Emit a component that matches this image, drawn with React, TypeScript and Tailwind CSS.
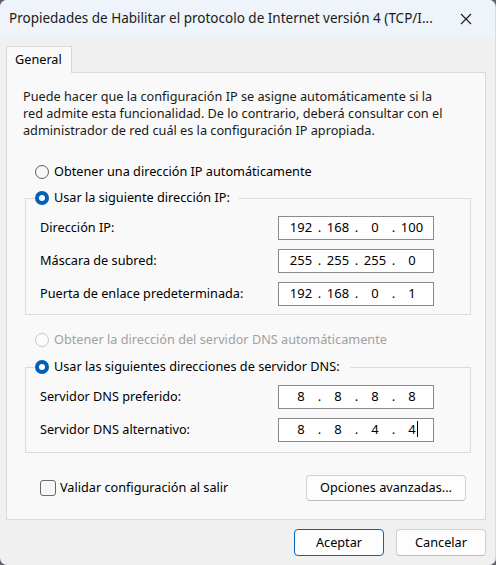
import React from "react";

const font = "font-['Noto_Sans',_'Liberation_Sans',sans-serif]";

const Radio = ({ checked, disabled }: { checked?: boolean; disabled?: boolean }) =>
  checked ? (
    <span className="w-[14px] h-[14px] rounded-full bg-[#005fb8] flex items-center justify-center shrink-0">
      <span className="w-[6px] h-[6px] rounded-full bg-white" />
    </span>
  ) : (
    <span
      className={
        "w-[14px] h-[14px] rounded-full border shrink-0 " +
        (disabled ? "border-[#c6c6c6] bg-[#fbfbfb]" : "border-[#5f5f5f] bg-[#f7f7f7]")
      }
    />
  );

const IpBox = ({ parts, caret }: { parts: string[]; caret?: boolean }) => (
  <div className="w-[156px] h-[24px] bg-white border border-[#8a8a8a] flex items-center pl-[7px] text-[13px] text-black">
    {parts.map((p, i) => (
      <React.Fragment key={i}>
        <span className="w-[30px] text-center relative">
          {p}
          {caret && i === 3 && (
            <span className="absolute top-[1px] left-[20px] w-[1px] h-[16px] bg-black" />
          )}
        </span>
        {i < 3 && <span className="w-[7px] text-center">.</span>}
      </React.Fragment>
    ))}
  </div>
);

const Row = ({ label, parts, caret }: { label: string; parts: string[]; caret?: boolean }) => (
  <div className="flex items-center justify-between pl-[14px] pr-[36px]">
    <span>{label}</span>
    <IpBox parts={parts} caret={caret} />
  </div>
);

export default function App() {
  return (
    <div className="w-[496px] h-[565px] bg-[#5d6168]">
      <div
        className={`${font} w-[496px] h-[565px] bg-[#f0f0f0] rounded-[7px] overflow-hidden flex flex-col text-[12.7px] text-[#000] border-r border-[#dcdcdc]`}
      >
        {/* title bar */}
        <div className="h-[37px] bg-[#eef4f9] flex items-center pl-[9px] shrink-0">
          <span className="text-[13.5px] text-[#1a1a1a] whitespace-nowrap">
            Propiedades de Habilitar el protocolo de Internet versión 4 (TCP/I...
          </span>
          <svg width="12" height="12" viewBox="0 0 12 12" className="ml-auto mr-[23px] shrink-0">
            <path d="M1 1 L11 11 M11 1 L1 11" stroke="#1a1a1a" strokeWidth="1.1" />
          </svg>
        </div>

        {/* tab */}
        <div className="pt-[9px] pl-[6px]">
          <div className="w-[66px] h-[27px] bg-[#f9f9f9] border border-b-0 border-[#d9d9d9] flex items-center pl-[8px] relative z-10 -mb-[1px]">
            General
          </div>
        </div>

        {/* panel */}
        <div className="ml-[6px] w-[480px] h-[448px] bg-[#f9f9f9] border border-[#d9d9d9] flex flex-col">
          <p className="ml-[16px] mt-[15px] leading-[17px] text-[#1a1a1a] whitespace-nowrap">
            Puede hacer que la configuración IP se asigne automáticamente si la
            <br />
            red admite esta funcionalidad. De lo contrario, deberá consultar con el
            <br />
            administrador de red cuál es la configuración IP apropiada.
          </p>

          <div className="ml-[28px] mt-[25px] h-[16px] flex items-center gap-[5px]">
            <Radio />
            <span>Obtener una dirección IP automáticamente</span>
          </div>

          <fieldset className="ml-[18px] mt-[10px] w-[446px] border border-[#dcdcdc] pb-[8px]">
            <legend className="ml-[9px] pr-[8px] h-[16px] flex items-center gap-[5px]">
              <Radio checked />
              <span>Usar la siguiente dirección IP:</span>
            </legend>
            <div className="mt-[10px] flex flex-col gap-[9px]">
              <Row label="Dirección IP:" parts={["192", "168", "0", "100"]} />
              <Row label="Máscara de subred:" parts={["255", "255", "255", "0"]} />
              <Row label="Puerta de enlace predeterminada:" parts={["192", "168", "0", "1"]} />
            </div>
          </fieldset>

          <div className="ml-[28px] mt-[17px] h-[16px] flex items-center gap-[5px] text-[#a0a0a0]">
            <Radio disabled />
            <span>Obtener la dirección del servidor DNS automáticamente</span>
          </div>

          <fieldset className="ml-[18px] mt-[11px] w-[446px] border border-[#dcdcdc] pb-[10px]">
            <legend className="ml-[9px] pr-[10px] h-[16px] flex items-center gap-[5px]">
              <Radio checked />
              <span>Usar las siguientes direcciones de servidor DNS:</span>
            </legend>
            <div className="mt-[10px] flex flex-col gap-[9px]">
              <Row label="Servidor DNS preferido:" parts={["8", "8", "8", "8"]} />
              <Row label="Servidor DNS alternativo:" parts={["8", "8", "4", "4"]} caret />
            </div>
          </fieldset>

          <div className="mt-[22px] ml-[33px] mr-[19px] flex items-center justify-between">
            <div className="flex items-center gap-[4px]">
              <span className="w-[16px] h-[16px] rounded-[3px] border border-[#6a6a6a] bg-[#f6f6f6]" />
              <span>Validar configuración al salir</span>
            </div>
            <button className="w-[160px] h-[26px] bg-[#fdfdfd] border border-[#d0d0d0] border-b-[#bcbcbc] rounded-[4px]">
              Opciones avanzadas...
            </button>
          </div>
        </div>

        {/* footer buttons */}
        <div className="mt-[9px] mr-[9px] flex justify-end gap-[12px]">
          <button className="w-[90px] h-[27px] bg-[#fdfdfd] border border-[#0067c0] rounded-[4px]">
            Aceptar
          </button>
          <button className="w-[90px] h-[27px] bg-[#fdfdfd] border border-[#d0d0d0] border-b-[#bcbcbc] rounded-[4px]">
            Cancelar
          </button>
        </div>
      </div>
    </div>
  );
}
